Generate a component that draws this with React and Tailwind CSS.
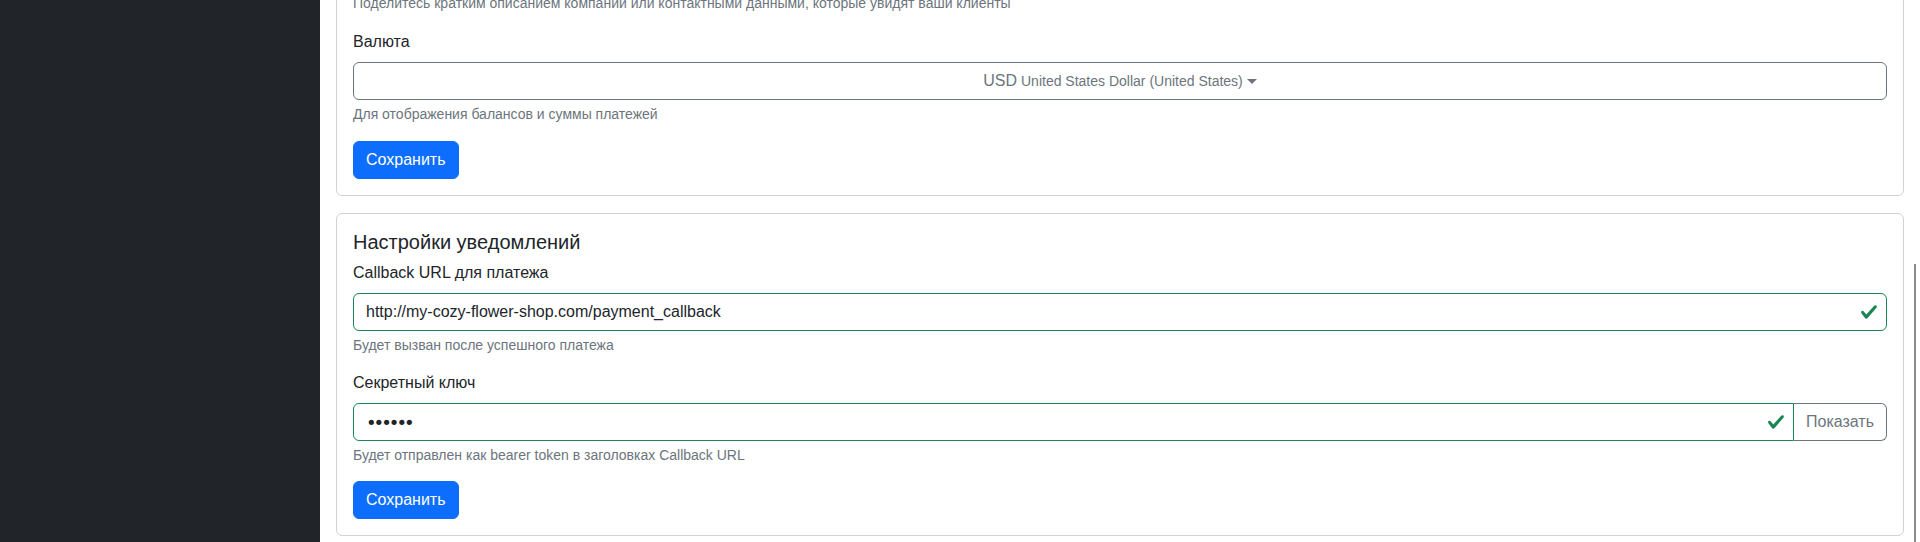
import React from "react";

const font = { fontFamily: '"Liberation Sans", Arial, sans-serif' };

function CheckIcon({ className }) {
  return (
    <svg viewBox="0 0 8 8" className={className} aria-hidden="true">
      <path
        fill="#198754"
        d="M2.3 6.73.6 4.53c-.4-1.04.46-1.4 1.1-.8l1.1 1.4 3.4-3.8c.6-.63 1.6-.27 1.2.7l-4 4.6c-.43.5-.8.4-1.1.1z"
      />
    </svg>
  );
}

function SaveButton() {
  return (
    <button className="rounded-md bg-[#0d6efd] hover:bg-[#0b5ed7] px-3 py-1.5 text-[16px] leading-6 text-white border border-[#0d6efd]">
      Сохранить
    </button>
  );
}

function Help({ children, className = "" }) {
  return <div className={"text-[14px] leading-[21px] text-[#6c757d] " + className}>{children}</div>;
}

export default function App() {
  const [url, setUrl] = React.useState("http://my-cozy-flower-shop.com/payment_callback");
  const [secret, setSecret] = React.useState("secret");
  const [show, setShow] = React.useState(false);

  return (
    <div className="relative flex h-[542px] overflow-hidden bg-white text-[#212529] text-[16px] leading-6" style={font}>
      <aside className="w-[320px] shrink-0 bg-[#212529]" />

      <main className="flex-1 min-w-0 px-4">
        {/* Общие настройки (прокручено вверх) */}
        <div className="-mt-[24px] rounded-md border border-[#d2d2d2] bg-white">
          <div className="p-4">
            <Help className="mb-4">
              Поделитесь кратким описанием компании или контактными данными, которые увидят ваши клиенты
            </Help>

            <div className="mb-4">
              <div className="mb-2">Валюта</div>
              <button className="w-full flex items-center justify-center rounded-md border border-[#6c757d] px-3 py-1.5 text-[#6c757d] leading-6 hover:bg-[#6c757d] hover:text-white">
                <span>USD</span>
                <span className="ml-1 text-[14px]">United States Dollar (United States)</span>
                <span className="ml-[4px] inline-block border-t-[5px] border-x-[5px] border-x-transparent border-t-[#6c757d]" />
              </button>
              <Help className="mt-1">Для отображения балансов и суммы платежей</Help>
            </div>

            <SaveButton />
          </div>
        </div>

        {/* Настройки уведомлений */}
        <div className="mt-[17px] rounded-md border border-[#d2d2d2] bg-white">
          <div className="p-4">
            <h5 className="text-[20px] leading-[24px] font-medium mb-[7px]">Настройки уведомлений</h5>

            <div className="mb-[15px]">
              <label className="block mb-2">Callback URL для платежа</label>
              <div className="relative">
                <input
                  value={url}
                  onChange={(e) => setUrl(e.target.value)}
                  className="block w-full rounded-md border border-[#198754] px-3 pr-9 py-1.5 leading-6 text-[#212529] outline-none"
                />
                <CheckIcon className="absolute right-[9px] top-[10px] h-[18px] w-[18px]" />
              </div>
              <Help className="mt-1">Будет вызван после успешного платежа</Help>
            </div>

            <div className="mb-[15px]">
              <label className="block mb-2">Секретный ключ</label>
              <div className="flex">
                <div className="relative flex-1 min-w-0">
                  <input
                    type={show ? "text" : "password"}
                    value={secret}
                    onChange={(e) => setSecret(e.target.value)}
                    className="block w-full h-[38px] rounded-l-md border border-[#198754] px-3 pr-9 leading-6 text-[18px] text-[#212529] outline-none font-['DejaVu_Sans'] tracking-[-3px]"
                  />
                  <CheckIcon className="absolute right-[9px] top-[10px] h-[18px] w-[18px]" />
                </div>
                <button
                  onClick={() => setShow((s) => !s)}
                  className="rounded-r-md border border-l-0 border-[#6c757d] px-3 py-1.5 leading-6 text-[#6c757d] hover:bg-[#6c757d] hover:text-white"
                >
                  Показать
                </button>
              </div>
              <Help className="mt-1">Будет отправлен как bearer token в заголовках Callback URL</Help>
            </div>

            <SaveButton />
          </div>
        </div>
      </main>

      <div className="absolute right-[4px] top-[264px] bottom-0 w-[2px] bg-[#8b8b8b]" />
    </div>
  );
}
